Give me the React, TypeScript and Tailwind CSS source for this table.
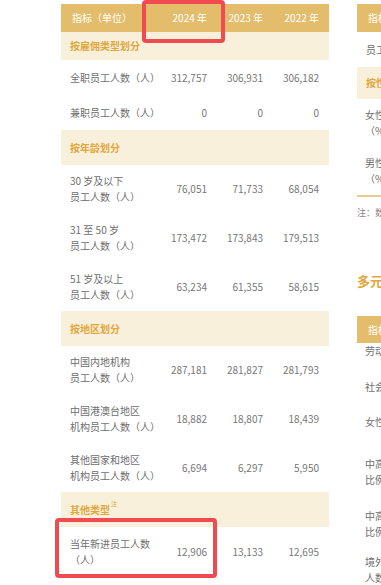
import React from 'react';

type Row = { label: string[]; values: string[]; h: string };
type Section = { title: string; note?: boolean; h: string; rows: Row[] };

const sections: Section[] = [
  {
    title: '按雇佣类型划分',
    h: 'h-[28px]',
    rows: [
      { label: ['全职员工人数（人）'], values: ['312,757', '306,931', '306,182'], h: 'h-[35px]' },
      { label: ['兼职员工人数（人）'], values: ['0', '0', '0'], h: 'h-[35px]' },
    ],
  },
  {
    title: '按年龄划分',
    h: 'h-[35px]',
    rows: [
      { label: ['30 岁及以下', '员工人数（人）'], values: ['76,051', '71,733', '68,054'], h: 'h-[48.7px]' },
      { label: ['31 至 50 岁', '员工人数（人）'], values: ['173,472', '173,843', '179,513'], h: 'h-[48.7px]' },
      { label: ['51 岁及以上', '员工人数（人）'], values: ['63,234', '61,355', '58,615'], h: 'h-[48.7px]' },
    ],
  },
  {
    title: '按地区划分',
    h: 'h-[35px]',
    rows: [
      { label: ['中国内地机构', '员工人数（人）'], values: ['287,181', '281,827', '281,793'], h: 'h-[48.7px]' },
      { label: ['中国港澳台地区', '机构员工人数（人）'], values: ['18,882', '18,807', '18,439'], h: 'h-[48.7px]' },
      { label: ['其他国家和地区', '机构员工人数（人）'], values: ['6,694', '6,297', '5,950'], h: 'h-[48.7px]' },
    ],
  },
  {
    title: '其他类型',
    note: true,
    h: 'h-[35px]',
    rows: [
      { label: ['当年新进员工人数', '（人）'], values: ['12,906', '13,133', '12,695'], h: 'h-[49px]' },
    ],
  },
];

function LeftTable() {
  return (
    <div className="w-[268px] shrink-0">
      <div className="flex h-[28px] items-center bg-[#e3bd6b] text-white">
        <div className="w-[100px] pl-[11px]">指标（单位）</div>
        <div className="w-[56px] pr-[10px] text-right">2024 年</div>
        <div className="w-[56px] pr-[10px] text-right">2023 年</div>
        <div className="w-[56px] pr-[10px] text-right">2022 年</div>
      </div>
      {sections.map((s) => (
        <div key={s.title}>
          <div className={`flex items-center bg-[#f9f0dc] pl-[9px] font-bold text-[#e2a73c] ${s.h}`}>
            {s.title}
            {s.note && <sup className="ml-[1px] -mt-[6px] text-[6px] font-normal">注</sup>}
          </div>
          {s.rows.map((r) => (
            <div key={r.label.join('')} className={`flex items-center text-[#6e6e6e] ${r.h}`}>
              <div className="w-[100px] pl-[9px]">
                {r.label.map((l) => (
                  <div key={l}>{l}</div>
                ))}
              </div>
              {r.values.map((v, i) => (
                <div key={i} className="w-[56px] pr-[10px] text-right text-[#777]">
                  {v}
                </div>
              ))}
            </div>
          ))}
        </div>
      ))}
    </div>
  );
}

function RightPanel() {
  return (
    <div className="w-[220px] shrink-0 text-[#6e6e6e]">
      <div className="flex h-[28px] items-center bg-[#e3bd6b] pl-[11px] text-white">指标（单位）</div>
      <div className="flex h-[35px] items-center pl-[9px]">员工总人数（人）</div>
      <div className="flex h-[32px] items-center bg-[#f9f0dc] pl-[9px] font-bold text-[#e2a73c]">按性别划分</div>
      <div className="flex h-[48px] flex-col justify-center pl-[8px]">
        <div>女性员工占比</div>
        <div>（%）</div>
      </div>
      <div className="flex h-[48px] flex-col justify-center pl-[8px]">
        <div>男性员工占比</div>
        <div>（%）</div>
      </div>
      <div className="h-[2px] bg-[#e8ca8c]" />
      <div className="mt-[10px] text-[9px] leading-[12px] text-[#8a8a8a]">注：数据统计范围为本集团全部机构</div>
      <div className="mt-[54px] text-[13px] font-bold leading-[16px] text-[#e2a73c]">多元化与平等机会</div>
      <div className="mt-[27px] flex h-[27px] items-center bg-[#e3bd6b] pl-[11px] text-white">指标（单位）</div>
      <div className="h-[36px] pl-[8px]">劳动合同签订率（%）</div>
      <div className="h-[35px] pl-[8px]">社会保险覆盖率（%）</div>
      <div className="h-[42px] pl-[8px]">女性管理者占比（%）</div>
      <div className="h-[52px] pl-[8px]">
        <div>中高层管理人员中女性</div>
        <div>比例（%）</div>
      </div>
      <div className="h-[46px] pl-[8px]">
        <div>中高级专业人员中女性</div>
        <div>比例（%）</div>
      </div>
      <div className="pl-[8px]">
        <div>境外机构本地员工</div>
        <div>人数（人）</div>
      </div>
    </div>
  );
}

export default function App() {
  return (
    <div className="relative h-[585px] w-[381px] overflow-hidden bg-white font-['Noto_Sans_CJK_SC','Noto_Sans',sans-serif] text-[10px] leading-[16px]">
      <div className="flex pt-[4px]">
        <div className="w-[61px] shrink-0" />
        <LeftTable />
        <div className="w-[28px] shrink-0" />
        <RightPanel />
      </div>
      <div className="absolute left-[142px] top-0 h-[43px] w-[83px] rounded-[4px] border-[4px] border-[#f04b50]" />
      <div className="absolute left-[55px] top-[518px] h-[60px] w-[162px] rounded-[4px] border-[4px] border-[#f04b50]" />
    </div>
  );
}
